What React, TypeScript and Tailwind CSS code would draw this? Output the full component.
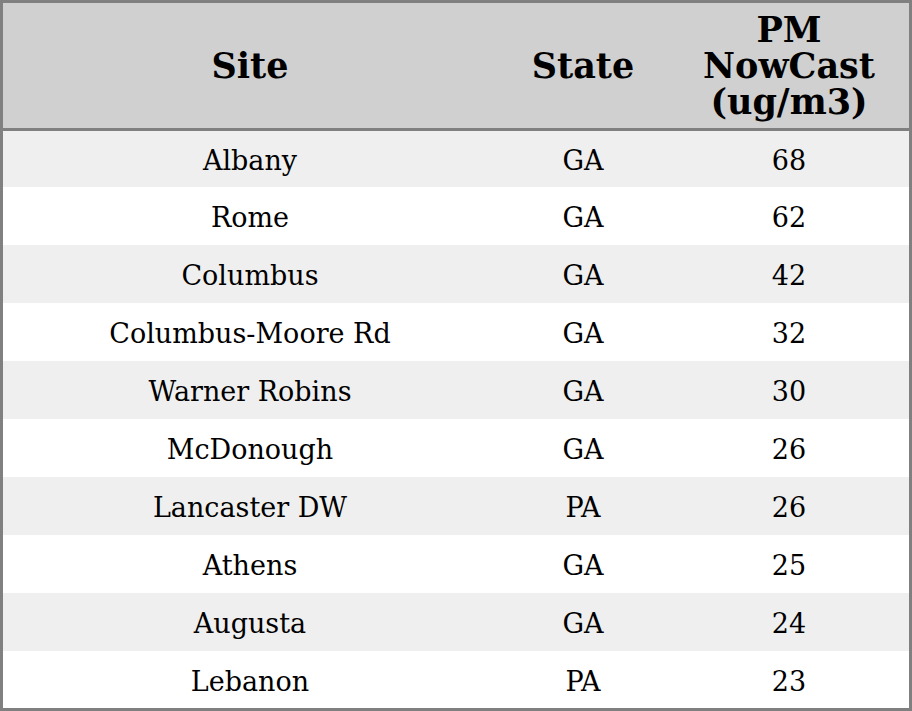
import React from "react";

const rows: [string, string, string][] = [
  ["Albany", "GA", "68"],
  ["Rome", "GA", "62"],
  ["Columbus", "GA", "42"],
  ["Columbus-Moore Rd", "GA", "32"],
  ["Warner Robins", "GA", "30"],
  ["McDonough", "GA", "26"],
  ["Lancaster DW", "PA", "26"],
  ["Athens", "GA", "25"],
  ["Augusta", "GA", "24"],
  ["Lebanon", "PA", "23"],
];

export default function App() {
  return (
    <div
      className="w-[912px] h-[711px] border-[3px] border-[#808080] flex flex-col bg-white text-black"
      style={{ fontFamily: '"DejaVu Serif", serif' }}
    >
      <div className="h-[128px] shrink-0 grid grid-cols-[494px_172px_240px] bg-[#d0d0d0] border-b-[3px] border-[#808080] font-bold text-[35px] leading-[36px]">
        <div className="flex items-center justify-center text-center">Site</div>
        <div className="flex items-center justify-center text-center">State</div>
        <div className="flex items-center justify-center text-center px-4">PM NowCast (ug/m3)</div>
      </div>
      <div className="flex-1 flex flex-col">
        {rows.map((r, i) => (
          <div
            key={i}
            className={
              "grid grid-cols-[494px_172px_240px] items-center text-[27px] pt-[5px] shrink-0 " +
              (i === 0 ? "h-[56px] " : i === rows.length - 1 ? "h-[57px] " : "h-[58px] ") +
              (i % 2 === 0 ? "bg-[#efefef]" : "bg-white")
            }
          >
            <div className="text-center">{r[0]}</div>
            <div className="text-center">{r[1]}</div>
            <div className="text-center">{r[2]}</div>
          </div>
        ))}
      </div>
    </div>
  );
}
